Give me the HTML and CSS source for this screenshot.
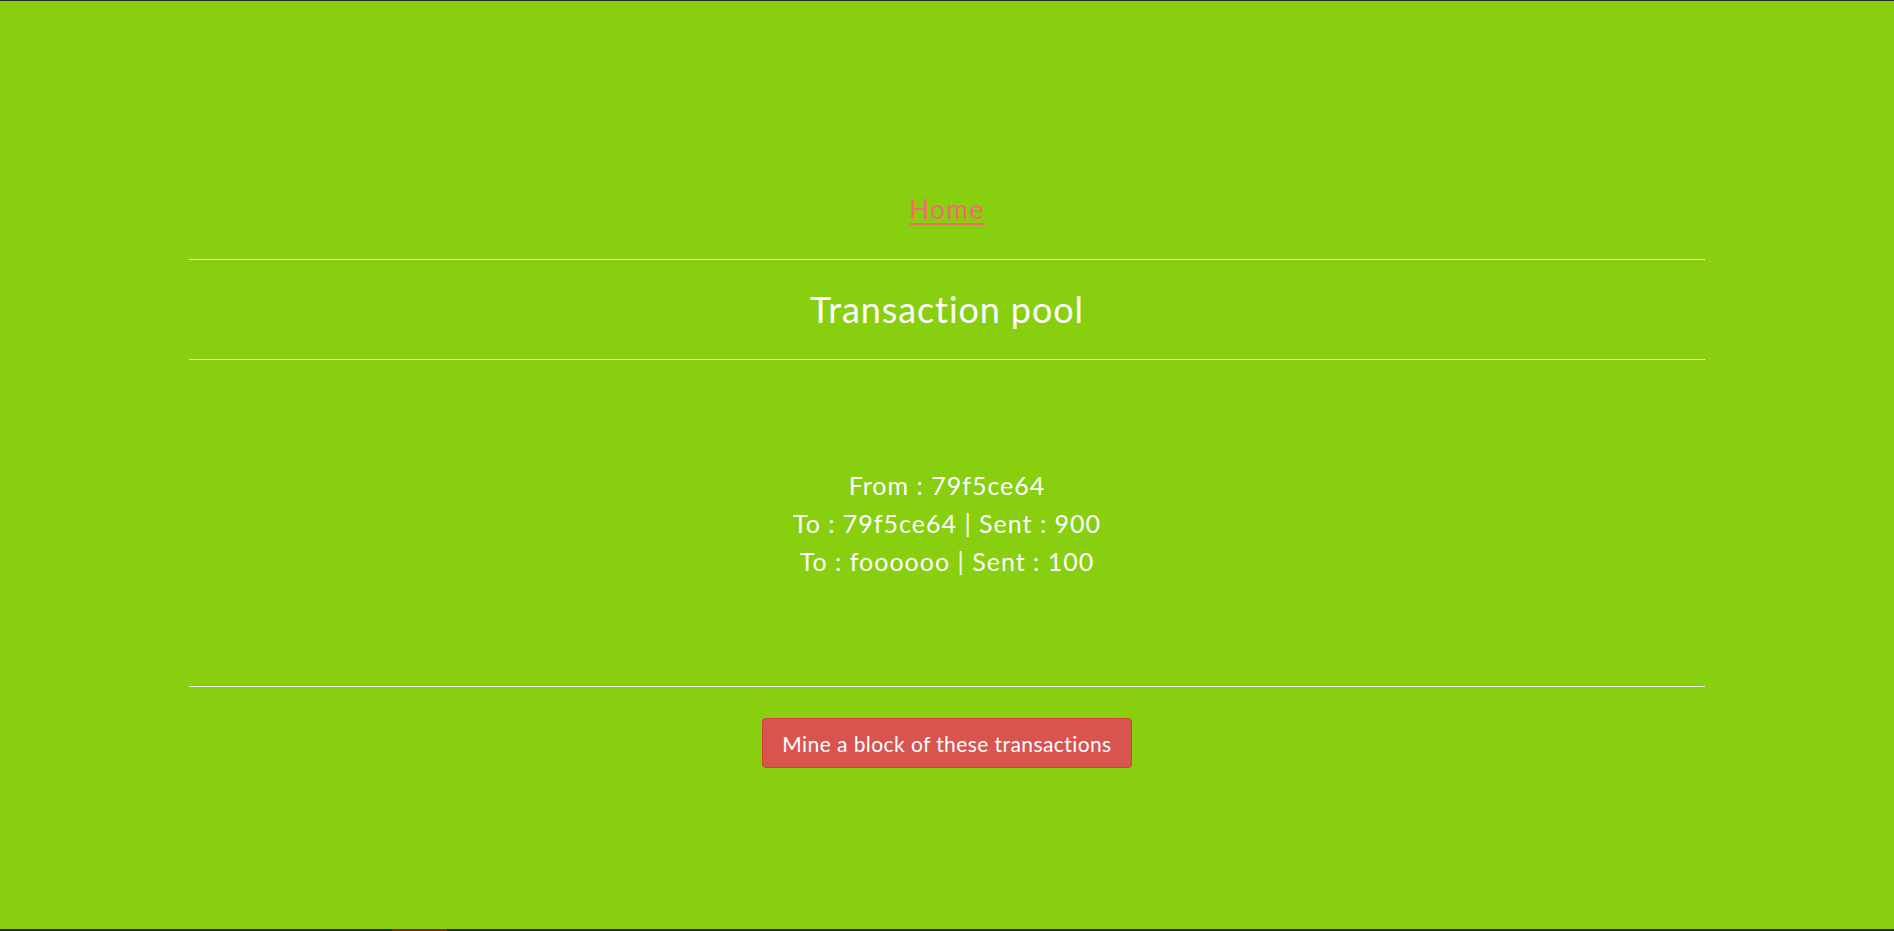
FILE: index.html
```html
<!DOCTYPE html>
<html>
<head>
<meta charset="utf-8">
<link rel="stylesheet" href="styles.css">
</head>
<body>
<div class="page">
  <main class="main">
    <nav class="nav"><a class="home" href="#">Home</a></nav>
    <div class="container">
      <hr class="rule">
      <h1 class="title">Transaction pool</h1>
      <hr class="rule">
      <div class="pool">
        <div class="line">From : 79f5ce64</div>
        <div class="line">To : 79f5ce64 | Sent : 900</div>
        <div class="line">To : foooooo | Sent : 100</div>
      </div>
      <hr class="rule">
      <div class="actions"><button class="mine">Mine a block of these transactions</button></div>
    </div>
  </main>
  <footer class="strip"><span class="strip-mark"></span></footer>
</div>
</body>
</html>
```
FILE: styles.css
```css
html, body {
  margin: 0;
  padding: 0;
}
body {
  font-family: "Lato", "Noto Sans", sans-serif;
  color: #ffffff;
  background: #87cf0f;
}
.page {
  height: 931px;
  display: flex;
  flex-direction: column;
  border-top: 1px solid #2b2b2b;
  box-sizing: border-box;
  overflow: hidden;
}
.main {
  flex: 1;
  background: #87cf0f;
}
.nav {
  padding-top: 190px;
  text-align: center;
  font-size: 26px;
  line-height: 36px;
}
.home {
  color: #f56a6e;
  text-decoration: underline;
  text-decoration-thickness: 2px;
  text-underline-offset: 4px;
  letter-spacing: 0.06em;
}
.container {
  width: 1516px;
  margin: 32px auto 0;
  text-align: center;
}
.rule {
  margin: 0;
  border: 0;
  height: 1px;
  background: #eef6e0;
}
.title {
  margin: 27px 0 28px;
  font-size: 36px;
  line-height: 44px;
  font-weight: 400;
  letter-spacing: 0.025em;
}
.pool {
  padding: 106px 0;
  font-size: 25px;
  line-height: 38px;
  letter-spacing: 0.04em;
}
.actions {
  padding-top: 31px;
}
.mine {
  font-family: inherit;
  font-size: 21px;
  letter-spacing: 0.02em;
  color: #fff;
  background: #d9534f;
  border: 1px solid #d43f3a;
  border-radius: 4px;
  height: 50px;
  padding: 0 19px;
}
.strip {
  height: 2px;
  background: #3b1f17;
  display: flex;
}
.strip-mark {
  margin-left: 392px;
  width: 55px;
  background: #8e1a1f;
}
```
